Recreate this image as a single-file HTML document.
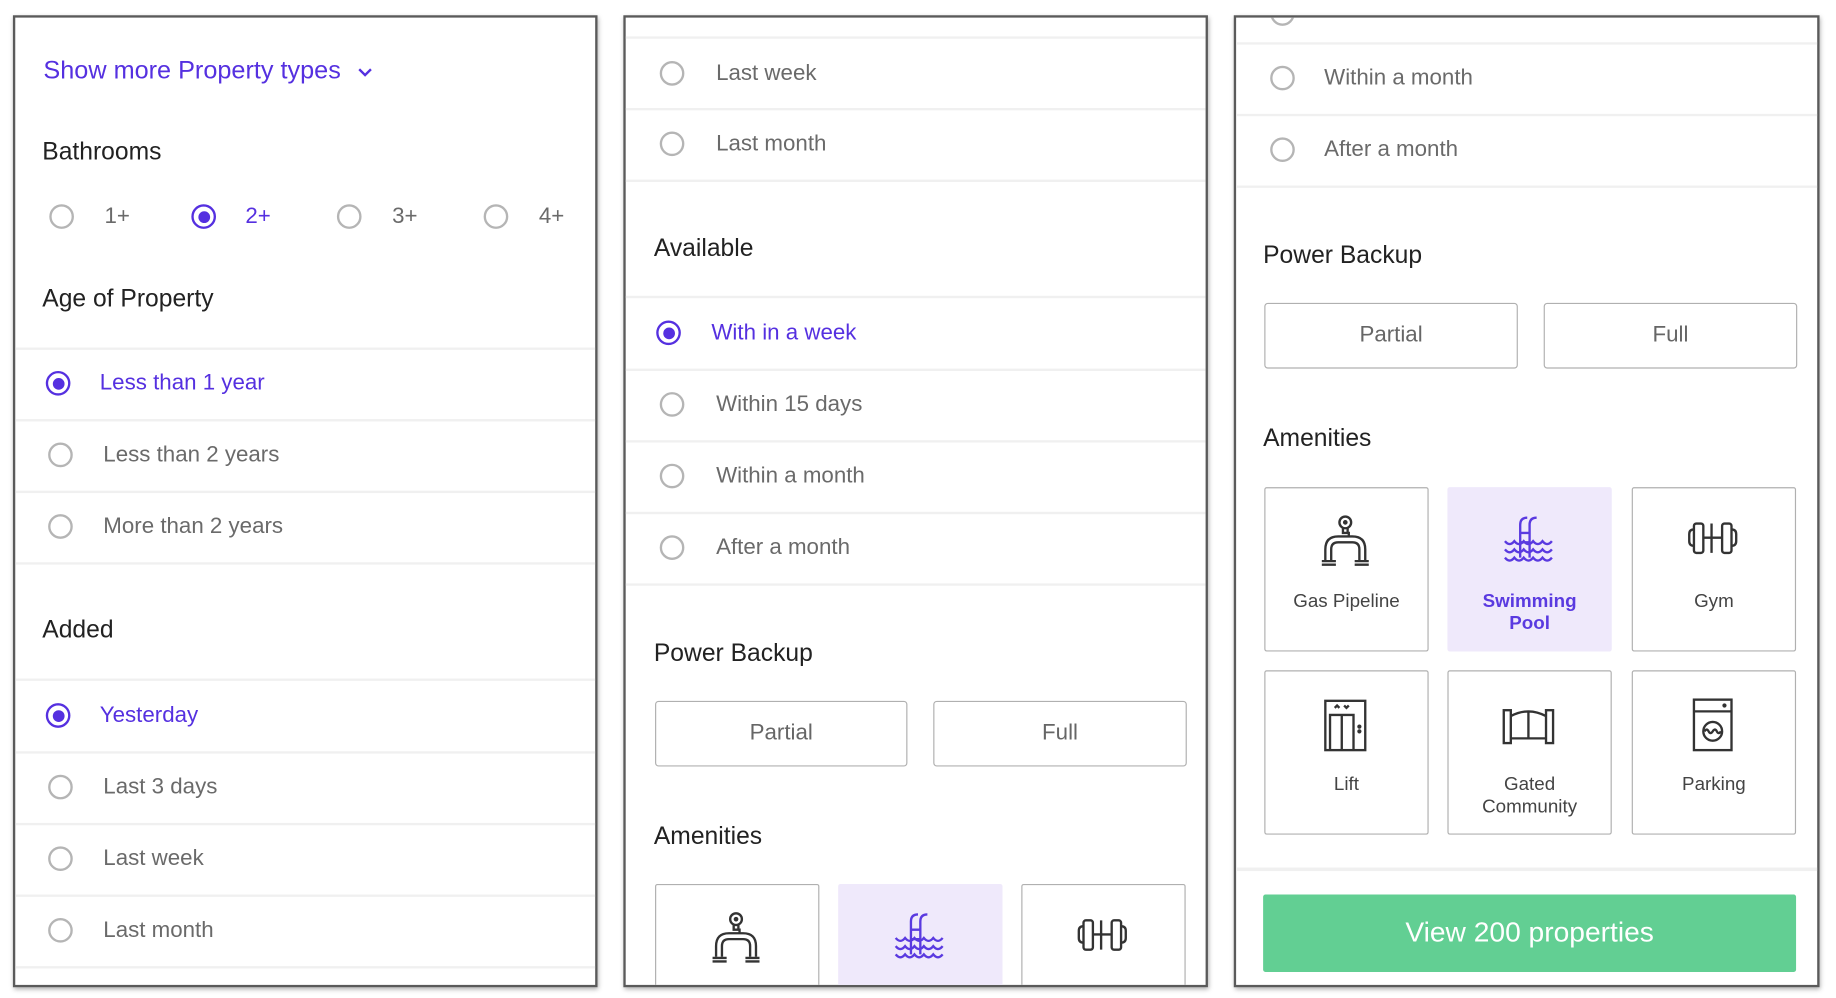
<!DOCTYPE html>
<html><head><meta charset="utf-8"><style>
html,body{margin:0;padding:0;background:#fff;width:1836px;height:998px;overflow:hidden}
#clip{position:relative;width:1836px;height:998px;overflow:hidden}
#w{position:absolute;left:0;top:0;width:1564px;height:846px;transform:scale(1.1739);transform-origin:0 0;font-family:"Liberation Sans",sans-serif}
.p{position:absolute;top:13px;height:824px;border:2px solid #5a5a5a;background:#fff;box-shadow:1px 2px 4px rgba(0,0,0,.35);overflow:hidden}
.t{position:absolute;height:26px;line-height:26px;white-space:nowrap}
.h{font-size:21px;color:#222}
.o{font-size:19px;color:#6a6a6a}
.s{color:#5530e0}
.r{position:absolute;width:21px;height:21px;border:2px solid #b5b5b5;border-radius:50%;box-sizing:border-box}
.r.on{border-color:#5530e0}
.r.on::after{content:"";position:absolute;left:3.5px;top:3.5px;width:10px;height:10px;border-radius:50%;background:#5530e0}
.d{position:absolute;left:0;right:0;height:2px;background:#f0f0f0}
.b{position:absolute;height:56px;border:1.5px solid #b0b0b0;border-radius:3px;box-sizing:border-box;text-align:center;line-height:54px;font-size:19px;color:#666}
.tile{position:absolute;width:140px;height:140px;border:1.5px solid #b0b0b0;border-radius:2px;box-sizing:border-box;text-align:center;font-size:16px;color:#444;line-height:19px}
.tile.sel{background:#efe9fb;border-color:#efe9fb;color:#5a3ae0;font-weight:bold}
.tile svg{position:absolute;left:44px;top:21px;width:52px;height:52px}
.tile .l{position:absolute;left:0;right:0;top:87px}
</style></head><body><div id="clip"><div id="w">
<svg width="0" height="0" style="position:absolute"><defs>
<g id="gas" fill="none" stroke="currentColor" stroke-width="2"><circle cx="24" cy="8" r="5"/><circle cx="24" cy="8" r="1" fill="currentColor"/><path d="M22 13v4h4v-4M21 17h6v3"/><path d="M7 40V31q0-11 11-11h12q11 0 11 11v9M12 40V31q0-6 6-6h12q6 0 6 6v9"/><path d="M4 41h12M4 44h12M32 41h12M32 44h12"/></g>
<g id="pool" fill="none" stroke="currentColor" stroke-width="2"><path d="M17 38V10q0-6 6-6M25 38V10q0-6 6-6M17 17h8M17 25h8"/><path d="M4 24q4 5 8 0q4 5 8 0q4 5 8 0q4 5 8 0q4 5 8 0M4 31q4 5 8 0q4 5 8 0q4 5 8 0q4 5 8 0q4 5 8 0M4 38q4 5 8 0q4 5 8 0q4 5 8 0q4 5 8 0q4 5 8 0"/></g>
<g id="gym" fill="none" stroke="currentColor" stroke-width="2"><path d="M8 14q-4 0-4 4v6q0 4 4 4"/><rect x="8" y="9" width="8" height="25" rx="2"/><rect x="32" y="9" width="8" height="25" rx="2"/><path d="M40 14q4 0 4 4v6q0 4-4 4M16 21h16M23 9v25"/></g>
<g id="lift" fill="none" stroke="currentColor" stroke-width="2"><rect x="7" y="4" width="34" height="42"/><path d="M11 46V16h20v30M21 16v30M15 10l2-2 2 2M23 8l2 2 2-2"/><circle cx="36" cy="26" r=".8" fill="currentColor"/><circle cx="36" cy="30" r=".8" fill="currentColor"/></g>
<g id="gate" fill="none" stroke="currentColor" stroke-width="2"><rect x="3" y="12" width="6" height="28"/><rect x="39" y="12" width="6" height="28"/><path d="M9 17q15-8 30 0M9 36h30M24 13v23"/></g>
<g id="park" fill="none" stroke="currentColor" stroke-width="2"><rect x="8" y="3" width="32" height="43"/><path d="M8 13h32"/><circle cx="34" cy="8" r=".8" fill="currentColor"/><circle cx="24" cy="30" r="8"/><path d="M17 30q2-3 3.5 0t3.5 0t3.5 0t3.5 0"/></g>
</defs></svg>

<!-- Panel 1 -->
<div class="p" style="left:11px;width:494px">
<div class="t s" style="left:24px;top:32px;font-size:21.5px">Show more Property types <svg width="14" height="10" style="margin-left:8px" viewBox="0 0 14 10"><path d="M2 2l5 5 5-5" fill="none" stroke="#5530e0" stroke-width="2"/></svg></div>
<div class="t h" style="left:23px;top:102px">Bathrooms</div>
<div class="r" style="left:29px;top:159px"></div><div class="t o" style="left:76px;top:157px">1+</div>
<div class="r on" style="left:150px;top:159px"></div><div class="t o s" style="left:196px;top:157px">2+</div>
<div class="r" style="left:274px;top:159px"></div><div class="t o" style="left:321px;top:157px">3+</div>
<div class="r" style="left:399px;top:159px"></div><div class="t o" style="left:446px;top:157px">4+</div>
<div class="t h" style="left:23px;top:227px">Age of Property</div>
<div class="d" style="top:281px"></div>
<div class="r on" style="left:26px;top:301px"></div><div class="t o s" style="left:72px;top:299px">Less than 1 year</div>
<div class="d" style="top:342px"></div>
<div class="r" style="left:28px;top:362px"></div><div class="t o" style="left:75px;top:360px">Less than 2 years</div>
<div class="d" style="top:403px"></div>
<div class="r" style="left:28px;top:423px"></div><div class="t o" style="left:75px;top:421px">More than 2 years</div>
<div class="d" style="top:464px"></div>
<div class="t h" style="left:23px;top:509px">Added</div>
<div class="d" style="top:563px"></div>
<div class="r on" style="left:26px;top:584px"></div><div class="t o s" style="left:72px;top:582px">Yesterday</div>
<div class="d" style="top:625px"></div>
<div class="r" style="left:28px;top:645px"></div><div class="t o" style="left:75px;top:643px">Last 3 days</div>
<div class="d" style="top:686px"></div>
<div class="r" style="left:28px;top:706px"></div><div class="t o" style="left:75px;top:704px">Last week</div>
<div class="d" style="top:747px"></div>
<div class="r" style="left:28px;top:767px"></div><div class="t o" style="left:75px;top:765px">Last month</div>
<div class="d" style="top:808px"></div>
</div>

<!-- Panel 2 -->
<div class="p" style="left:531px;width:494px">
<div class="d" style="top:16px"></div>
<div class="r" style="left:29px;top:37px"></div><div class="t o" style="left:77px;top:35px">Last week</div>
<div class="d" style="top:77px"></div>
<div class="r" style="left:29px;top:97px"></div><div class="t o" style="left:77px;top:95px">Last month</div>
<div class="d" style="top:138px"></div>
<div class="t h" style="left:24px;top:184px">Available</div>
<div class="d" style="top:237px"></div>
<div class="r on" style="left:26px;top:258px"></div><div class="t o s" style="left:73px;top:256px">With in a week</div>
<div class="d" style="top:299px"></div>
<div class="r" style="left:29px;top:319px"></div><div class="t o" style="left:77px;top:317px">Within 15 days</div>
<div class="d" style="top:360px"></div>
<div class="r" style="left:29px;top:380px"></div><div class="t o" style="left:77px;top:378px">Within a month</div>
<div class="d" style="top:421px"></div>
<div class="r" style="left:29px;top:441px"></div><div class="t o" style="left:77px;top:439px">After a month</div>
<div class="d" style="top:482px"></div>
<div class="t h" style="left:24px;top:529px">Power Backup</div>
<div class="b" style="left:25px;top:582px;width:215px">Partial</div>
<div class="b" style="left:262px;top:582px;width:216px">Full</div>
<div class="t h" style="left:24px;top:685px">Amenities</div>
<div class="tile" style="left:25px;top:738px"><svg style="color:#333"><use href="#gas"/></svg></div>
<div class="tile sel" style="left:181px;top:738px"><svg style="color:#5a3ae0"><use href="#pool"/></svg></div>
<div class="tile" style="left:337px;top:738px"><svg style="color:#333"><use href="#gym"/></svg></div>
</div>

<!-- Panel 3 -->
<div class="p" style="left:1051px;width:495px">
<div class="r" style="left:29px;top:-14px"></div>
<div class="d" style="top:21px"></div>
<div class="r" style="left:29px;top:41px"></div><div class="t o" style="left:75px;top:39px">Within a month</div>
<div class="d" style="top:82px"></div>
<div class="r" style="left:29px;top:102px"></div><div class="t o" style="left:75px;top:100px">After a month</div>
<div class="d" style="top:143px"></div>
<div class="t h" style="left:23px;top:190px">Power Backup</div>
<div class="b" style="left:24px;top:243px;width:216px">Partial</div>
<div class="b" style="left:262px;top:243px;width:216px">Full</div>
<div class="t h" style="left:23px;top:346px">Amenities</div>
<div class="tile" style="left:24px;top:400px"><svg style="color:#333"><use href="#gas"/></svg><div class="l">Gas Pipeline</div></div>
<div class="tile sel" style="left:180px;top:400px"><svg style="color:#5a3ae0"><use href="#pool"/></svg><div class="l">Swimming<br>Pool</div></div>
<div class="tile" style="left:337px;top:400px"><svg style="color:#333"><use href="#gym"/></svg><div class="l">Gym</div></div>
<div class="tile" style="left:24px;top:556px"><svg style="color:#333"><use href="#lift"/></svg><div class="l">Lift</div></div>
<div class="tile" style="left:180px;top:556px"><svg style="color:#333"><use href="#gate"/></svg><div class="l">Gated<br>Community</div></div>
<div class="tile" style="left:337px;top:556px"><svg style="color:#333"><use href="#park"/></svg><div class="l">Parking</div></div>
<div style="position:absolute;left:0;right:0;top:724px;height:3px;background:#f0f0f0"></div>
<div style="position:absolute;left:23px;top:747px;width:454px;height:66px;background:#62cf93;border-radius:2px;color:#fff;font-size:24px;text-align:center;line-height:66px">View 200 properties</div>
</div>
</div></div></body></html>
